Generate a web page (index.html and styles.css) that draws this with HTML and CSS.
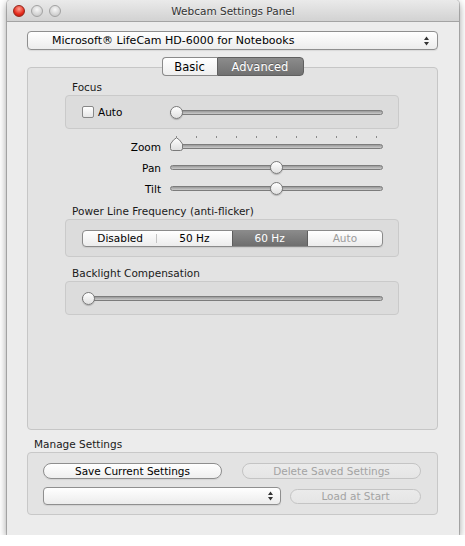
FILE: index.html
```html
<!DOCTYPE html>
<html lang="en">
<head>
    <meta charset="UTF-8">
    <title>Webcam Settings Panel</title>
    <link rel="stylesheet" href="styles.css">
</head>
<body>
    <div class="window">
        <div class="titlebar">
            <div class="lights">
                <span class="light close"></span>
                <span class="light"></span>
                <span class="light"></span>
            </div>
            <div class="title">Webcam Settings Panel</div>
            <div></div>
        </div>

        <div class="content">
            <div class="popup device">
                <span>Microsoft® LifeCam HD-6000 for Notebooks</span>
                <svg class="updown" width="7" height="10" viewBox="0 0 7 10"><path d="M3.5 0.5 L6 4 H1 Z M3.5 9.5 L1 6 H6 Z" fill="#333"/></svg>
            </div>

            <div class="tabs">
                <span class="tab basic">Basic</span>
                <span class="tab on">Advanced</span>
            </div>

            <div class="tabbox">
                <div class="label">Focus</div>
                <div class="group focus-group">
                    <label class="check"><span class="box"></span>Auto</label>
                    <div class="slider focus-slider">
                        <span class="track"></span>
                        <span class="knob" style="--v:0"></span>
                    </div>
                </div>

                <div class="rows">
                    <span class="rlabel">Zoom</span>
                    <div class="slider">
                        <span class="ticks"></span>
                        <span class="track"></span>
                        <svg class="pointer" width="13" height="14" viewBox="0 0 13 14">
                            <defs>
                                <linearGradient id="pg" x1="0" y1="0" x2="0" y2="1">
                                    <stop offset="0" stop-color="#ffffff"/>
                                    <stop offset="1" stop-color="#dedede"/>
                                </linearGradient>
                            </defs>
                            <path d="M0.5 7 Q3.5 2 6.5 0.8 Q9.5 2 12.5 7 V11.5 Q12.5 13.5 10.5 13.5 H2.5 Q0.5 13.5 0.5 11.5 Z" fill="url(#pg)" stroke="#7a7a7a"/>
                        </svg>
                    </div>
                    <span class="rlabel">Pan</span>
                    <div class="slider">
                        <span class="track"></span>
                        <span class="knob" style="--v:.5"></span>
                    </div>
                    <span class="rlabel">Tilt</span>
                    <div class="slider">
                        <span class="track"></span>
                        <span class="knob" style="--v:.5"></span>
                    </div>
                </div>

                <div class="label power-label">Power Line Frequency (anti-flicker)</div>
                <div class="group power-group">
                    <div class="segmented">
                        <span class="seg sep">Disabled</span>
                        <span class="seg">50 Hz</span>
                        <span class="seg on">60 Hz</span>
                        <span class="seg off">Auto</span>
                    </div>
                </div>

                <div class="label back-label">Backlight Compensation</div>
                <div class="group back-group">
                    <div class="slider">
                        <span class="track"></span>
                        <span class="knob" style="--v:0"></span>
                    </div>
                </div>
            </div>

            <div class="label manage-label">Manage Settings</div>
            <div class="group manage">
                <div class="mrow">
                    <button class="btn wide">Save Current Settings</button>
                    <button class="btn wide" disabled>Delete Saved Settings</button>
                </div>
                <div class="mrow">
                    <div class="popup small">
                        <span></span>
                        <svg class="updown" width="7" height="10" viewBox="0 0 7 10"><path d="M3.5 0.5 L6 4 H1 Z M3.5 9.5 L1 6 H6 Z" fill="#333"/></svg>
                    </div>
                    <button class="btn load" disabled>Load at Start</button>
                </div>
            </div>
        </div>
    </div>
</body>
</html>
```

FILE: styles.css
```css
body {
    margin: 0;
    background: #fff;
    font-family: "DejaVu Sans", sans-serif;
    color: #000;
}
.window {
    width: 452px;
    height: 535px;
    margin-left: 7px;
    background: #ececec;
    border-radius: 4px 4px 0 0;
    box-shadow: 0 0 0 1px rgba(0, 0, 0, 0.2), 0 3px 9px rgba(0, 0, 0, 0.45);
}
.titlebar {
    height: 21px;
    border-bottom: 1px solid #a3a3a3;
    border-radius: 4px 4px 0 0;
    background: linear-gradient(#eaeaea, #d2d2d2);
    display: grid;
    grid-template-columns: 1fr auto 1fr;
    align-items: center;
}
.lights {
    display: flex;
    gap: 6px;
    padding-left: 6px;
}
.light {
    width: 12px;
    height: 12px;
    box-sizing: border-box;
    border-radius: 50%;
    border: 1px solid #a2a2a2;
    background: radial-gradient(circle at 50% 35%, #f7f7f7, #cfcfcf 70%, #bdbdbd);
}
.light.close {
    border-color: #94251a;
    background: radial-gradient(circle at 50% 30%, #ff9f90, #e42a1c 60%, #b51307);
}
.title {
    font-size: 10.5px;
    color: #333;
    text-shadow: 0 1px 0 rgba(255, 255, 255, 0.6);
}
.content {
    padding: 9px 21px 0 20px;
}
.popup {
    box-sizing: border-box;
    border: 1px solid #8f8f8f;
    border-radius: 4px;
    background: linear-gradient(#ffffff, #ececec);
    box-shadow: 0 1px 1px rgba(0, 0, 0, 0.08);
    display: flex;
    align-items: center;
    justify-content: space-between;
}
.device {
    height: 19px;
    padding: 0 7px 0 24px;
    font-size: 11px;
}
.small {
    width: 238px;
    height: 18px;
    padding: 0 6px;
}
.tabs {
    display: flex;
    justify-content: center;
    margin-top: 7px;
    position: relative;
    z-index: 1;
}
.tab {
    height: 19px;
    box-sizing: border-box;
    display: flex;
    align-items: center;
    justify-content: center;
    font-size: 11.5px;
}
.tab.basic {
    width: 55px;
    border: 1px solid #8a8a8a;
    border-right: none;
    border-radius: 4px 0 0 4px;
    background: linear-gradient(#ffffff, #eeeeee);
    color: #000;
}
.tab.on {
    width: 87px;
    border: 1px solid #606060;
    border-radius: 0 4px 4px 0;
    background: linear-gradient(#8c8c8c, #717171);
    color: #fff;
    text-shadow: 0 -1px 0 rgba(0, 0, 0, 0.3);
}
.tabbox {
    margin-top: -9px;
    height: 363px;
    box-sizing: border-box;
    border: 1px solid #c6c6c6;
    border-radius: 4px;
    background: #e3e3e3;
    padding: 12px 38px 0 37px;
}
.label {
    font-size: 10.5px;
    line-height: 14px;
    padding-left: 7px;
    color: #1a1a1a;
}
.group {
    margin-top: 1px;
    box-sizing: border-box;
    border: 1px solid #cacaca;
    border-radius: 4px;
    background: #dcdcdc;
}
.focus-group {
    height: 34px;
    display: flex;
    align-items: center;
    padding: 0 15px 0 16px;
}
.check {
    display: flex;
    align-items: center;
    gap: 4px;
    font-size: 10.5px;
}
.box {
    width: 12px;
    height: 12px;
    box-sizing: border-box;
    border: 1px solid #888;
    border-radius: 2px;
    background: linear-gradient(#ffffff, #e6e6e6);
}
.focus-slider {
    width: 213px;
    margin-left: auto;
}
.slider {
    position: relative;
    height: 15px;
}
.track {
    position: absolute;
    left: 0;
    right: 0;
    top: 5px;
    height: 5px;
    box-sizing: border-box;
    border: 1px solid #7c7c7c;
    border-radius: 3px;
    background: linear-gradient(#999, #cbcbcb);
}
.knob {
    position: absolute;
    top: 1px;
    left: calc((100% - 13px) * var(--v));
    width: 13px;
    height: 13px;
    box-sizing: border-box;
    border: 1px solid #7a7a7a;
    border-radius: 50%;
    background: linear-gradient(#ffffff, #e0e0e0);
    box-shadow: 0 1px 1px rgba(0, 0, 0, 0.2);
}
.ticks {
    position: absolute;
    left: 6px;
    width: 201px;
    top: -3px;
    height: 2px;
    background: repeating-linear-gradient(to right, #8a8a8a 0 1px, transparent 1px 20px);
}
.pointer {
    position: absolute;
    left: 0;
    top: -2px;
}
.rows {
    display: grid;
    grid-template-columns: 96px 213px;
    grid-auto-rows: 21px;
    column-gap: 9px;
    align-items: center;
    margin-top: 7px;
}
.rlabel {
    text-align: right;
    font-size: 10.5px;
}
.power-label {
    margin-top: 5px;
}
.power-group {
    height: 38px;
    display: flex;
    align-items: center;
    padding: 0 15px 0 16px;
}
.segmented {
    flex: 1;
    display: flex;
    height: 17px;
    box-sizing: border-box;
    border: 1px solid #8a8a8a;
    border-radius: 4px;
    overflow: hidden;
    background: linear-gradient(#ffffff, #ececec);
    box-shadow: 0 1px 1px rgba(0, 0, 0, 0.08);
}
.seg {
    flex: 1;
    display: flex;
    align-items: center;
    justify-content: center;
    font-size: 10.5px;
    position: relative;
}
.seg.sep::after {
    content: "";
    position: absolute;
    right: 0;
    top: 3px;
    bottom: 3px;
    width: 1px;
    background: #c4c4c4;
}
.seg.on {
    background: linear-gradient(#8a8a8a, #6e6e6e);
    color: #fff;
    border-left: 1px solid #5e5e5e;
    border-right: 1px solid #5e5e5e;
}
.seg.off {
    color: #9b9b9b;
}
.back-label {
    margin-top: 9px;
}
.back-group {
    height: 34px;
    padding: 9px 15px 0 16px;
}
.manage-label {
    margin-top: 7px;
}
.manage {
    height: 63px;
    background: #e3e3e3;
    border-color: #c8c8c8;
    padding: 10px 16px 0 15px;
    display: flex;
    flex-direction: column;
    gap: 8px;
}
.mrow {
    display: flex;
    justify-content: space-between;
    align-items: center;
}
.btn {
    height: 16px;
    padding: 0;
    font-family: inherit;
    font-size: 10.5px;
    color: #000;
    border: 1px solid #8e8e8e;
    border-radius: 9px;
    background: linear-gradient(#ffffff, #efefef);
    box-shadow: 0 1px 1px rgba(0, 0, 0, 0.08);
}
.btn:disabled {
    color: #a3a3a3;
    border-color: #c4c4c4;
    background: linear-gradient(#ebebeb, #e5e5e5);
    box-shadow: none;
}
.wide {
    width: 179px;
}
.load {
    width: 131px;
    height: 15px;
}
```
